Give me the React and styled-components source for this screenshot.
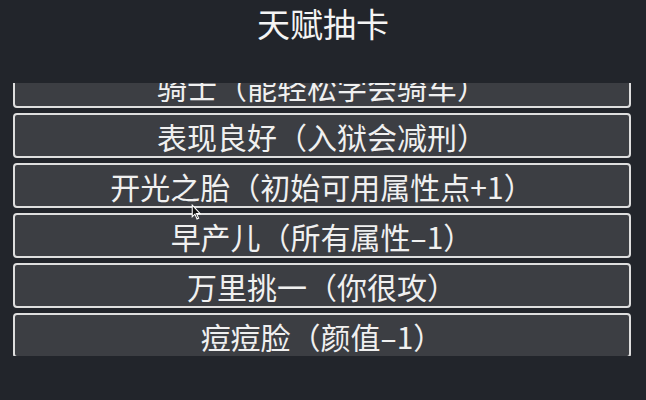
import React from "react";
import styled, { createGlobalStyle } from "styled-components";

const GlobalStyle = createGlobalStyle`
  html, body {
    margin: 0;
    padding: 0;
    background: #22252b;
  }
  body {
    font-family: "Noto Sans CJK SC", "Noto Sans", sans-serif;
  }
`;

const Page = styled.div`
  position: relative;
  width: 646px;
  height: 400px;
  overflow: hidden;
  background: #22252b;
  color: #f2f2f2;
`;

const Title = styled.h1`
  margin: 0;
  height: 83px;
  box-sizing: border-box;
  font-size: 33px;
  font-weight: 400;
  line-height: 46px;
  text-align: center;
  color: #f4f4f4;
`;

const ListViewport = styled.div`
  height: 273px;
  overflow: hidden;
  padding: 0 15px 0 13px;
`;

const List = styled.ul`
  list-style: none;
  margin: -20px 0 0;
  padding: 0;
  display: flex;
  flex-direction: column;
  gap: 5px;
`;

const TalentCard = styled.li`
  height: 45px;
  box-sizing: border-box;
  border: 2px solid #dedede;
  border-radius: 4px;
  background: #3c3e43;
  display: flex;
  align-items: center;
  justify-content: center;
  font-size: 30px;
  line-height: 1;
  color: #f0f0f0;
  white-space: nowrap;
`;

const Pointer = styled.svg`
  position: absolute;
  left: 191px;
  top: 204px;
  pointer-events: none;
`;

const talents = [
  "骑士（能轻松学会骑车）",
  "表现良好（入狱会减刑）",
  "开光之胎（初始可用属性点+1）",
  "早产儿（所有属性–1）",
  "万里挑一（你很攻）",
  "痘痘脸（颜值–1）",
];

export default function App() {
  return (
    <Page>
      <GlobalStyle />
      <Title>天赋抽卡</Title>
      <ListViewport>
        <List>
          {talents.map((name, i) => (
            <TalentCard key={i}>{name}</TalentCard>
          ))}
        </List>
      </ListViewport>
      {/* mouse pointer */}
      <Pointer width="11" height="16" viewBox="0 0 10 15">
        <path d="M1 1 L1 12 L3.5 9.5 L5.5 14 L7 13.3 L5 9 L8.5 9 Z" fill="#111" stroke="#fff" strokeWidth="1" />
      </Pointer>
    </Page>
  );
}
